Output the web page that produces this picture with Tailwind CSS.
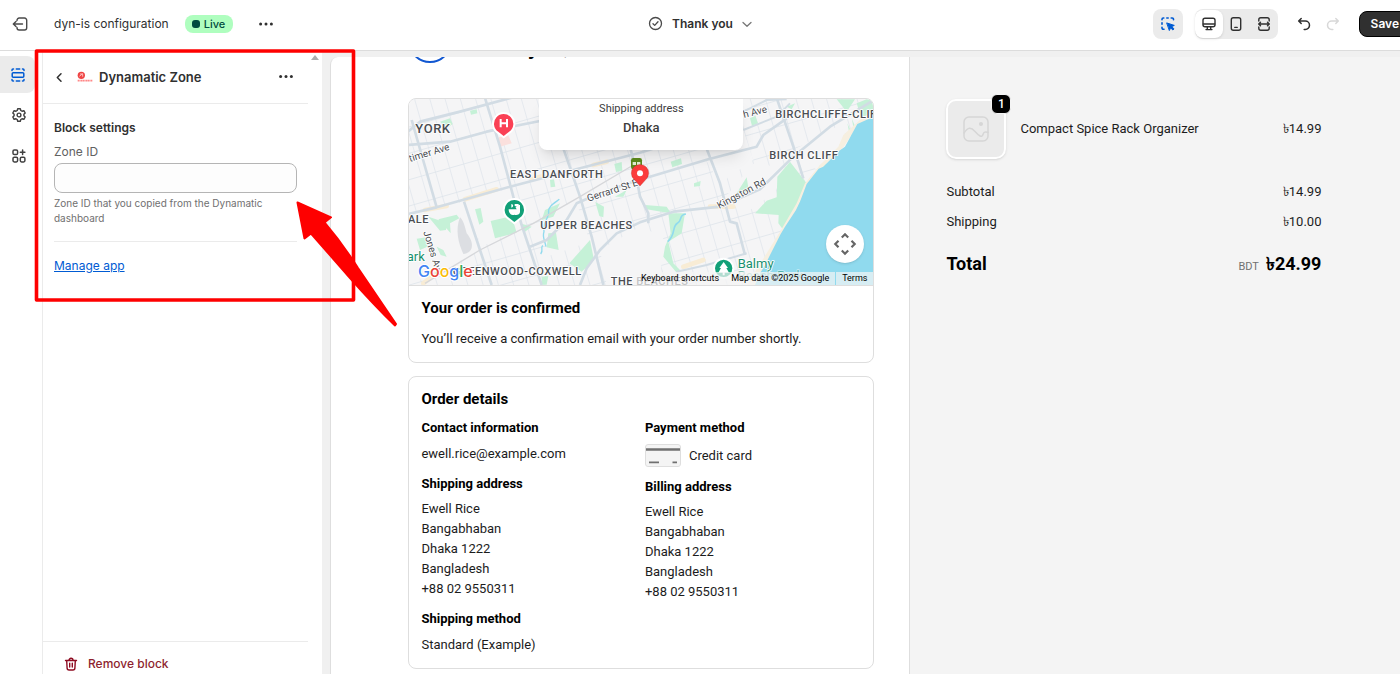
<!DOCTYPE html>
<html lang="en">
<head>
    <meta charset="UTF-8">
    <meta name="viewport" content="width=device-width, initial-scale=1.0">
    <title>dyn-is configuration</title>
    <script src="https://cdn.jsdelivr.net/npm/@tailwindcss/browser@4"></script>
</head>
<body class="relative h-screen overflow-hidden flex flex-col bg-[#f0f0f0] font-['Inter',sans-serif] text-[13px] leading-5 text-[#303030]">
    <!-- Top bar -->
    <header class="relative z-10 h-[51px] shrink-0 overflow-hidden grid grid-cols-[1fr_auto_1fr] items-center bg-white border-b border-[#dcdcdc] pb-[3px]">
        <div class="flex items-center pl-3">
            <button type="button" aria-label="Exit">
                <svg class="size-4" viewBox="0 0 16 16" fill="none" stroke="#4a4a4a" stroke-width="1.4" stroke-linecap="round" stroke-linejoin="round"><path d="M5 4.600V4.200A2.200 2.200 0 0 1 7.200 2H12.500A2.200 2.200 0 0 1 14.700 4.200V11.800A2.200 2.200 0 0 1 12.500 14H7.200A2.200 2.200 0 0 1 5 11.800V11.400"/><path d="M10.500 8H1.500M4 5.400L1.300 8L4 10.600"/></svg>
            </button>
            <h1 class="ml-[26px] text-xs leading-5">dyn-is configuration</h1>
            <span class="ml-4 flex items-center gap-1 h-[18px] rounded-lg bg-[#affebf] pl-[7px] pr-2 text-[11px] font-medium text-[#014b40]"><span class="size-2 rounded-[3px] bg-[#014b40]"></span>Live</span>
            <button type="button" aria-label="More actions" class="ml-[26px]">
                <svg class="w-[14px] h-4" viewBox="0 0 14 16" fill="#303030"><circle cx="1.600" cy="8" r="1.500"/><circle cx="7" cy="8" r="1.500"/><circle cx="12.400" cy="8" r="1.500"/></svg>
            </button>
        </div>
        <button type="button" class="flex items-center gap-[9px] text-xs leading-5 font-semibold">
            <svg class="size-[15px]" viewBox="0 0 15 15" fill="none" stroke="#4a4a4a" stroke-width="1.300" stroke-linecap="round" stroke-linejoin="round"><circle cx="7.500" cy="7.500" r="6"/><path d="M5 7.800L6.700 9.400L10 5.800"/></svg>
            Thank you
            <svg class="size-[10px]" viewBox="0 0 10 10" fill="none" stroke="#777" stroke-width="1.300" stroke-linecap="round" stroke-linejoin="round"><path d="M1 3.500L5 7.300L9 3.500"/></svg>
        </button>
        <div class="flex items-center justify-end -mr-[11px]">
            <button type="button" aria-label="Inspector" class="size-[30px] rounded-lg bg-[#ebebeb] grid place-items-center">
                <svg class="size-4" viewBox="0 0 16 16" fill="none" stroke="#005bd3" stroke-width="1.600" stroke-linecap="round" stroke-linejoin="round"><path d="M2 3.800V3.200A1.200 1.200 0 0 1 3.200 2H3.800M6.800 2H8.200M11.200 2H12.300A1.200 1.200 0 0 1 13.500 3.200V3.800M2 6.800V8.200M2 11.300V12A1.200 1.200 0 0 0 3.200 13.200H4"/><path fill="#005bd3" stroke-width="1" d="M7 7L14.300 9.400L11.800 10.600L14 12.900L12.800 14L10.600 11.800L9.500 14.200Z"/></svg>
            </button>
            <div class="ml-3 flex items-center h-[30px] rounded-lg bg-[#ebebeb]">
                <button type="button" aria-label="Desktop" class="size-7 rounded-lg bg-white shadow grid place-items-center">
                    <svg class="size-4" viewBox="0 0 16 16" fill="none" stroke="#303030" stroke-width="1.400" stroke-linecap="round" stroke-linejoin="round"><rect x="2" y="2.200" width="12" height="8.600" rx="2"/><path d="M2.300 8H13.700M6.300 11V13.300M9.700 11V13.300M5 13.600H11"/></svg>
                </button>
                <button type="button" aria-label="Mobile" class="size-[27px] grid place-items-center">
                    <svg class="size-4" viewBox="0 0 16 16" fill="none" stroke="#303030" stroke-width="1.400" stroke-linecap="round" stroke-linejoin="round"><rect x="3.300" y="1.800" width="9.400" height="12.400" rx="2"/><path d="M6.800 11.400H9.200"/></svg>
                </button>
                <button type="button" aria-label="Full width" class="size-7 grid place-items-center">
                    <svg class="size-4" viewBox="0 0 16 16" fill="none" stroke="#303030" stroke-width="1.400" stroke-linecap="round" stroke-linejoin="round"><path d="M2.800 5V3.800A2 2 0 0 1 4.800 1.800H11.200A2 2 0 0 1 13.200 3.800V5M2.800 11V12.200A2 2 0 0 0 4.800 14.200H11.200A2 2 0 0 0 13.200 12.200V11M3 8H13M4.500 6.300L2.700 8L4.500 9.700M11.500 6.300L13.300 8L11.500 9.700"/></svg>
                </button>
            </div>
            <button type="button" aria-label="Undo" class="ml-[18px]">
                <svg class="size-4" viewBox="0 0 16 16" fill="none" stroke="#303030" stroke-width="1.500" stroke-linecap="round" stroke-linejoin="round"><path d="M5.200 2.500L2.700 5L5.200 7.500M3 5H9.300A4.200 4.200 0 0 1 9.300 13.400H8.200"/></svg>
            </button>
            <button type="button" aria-label="Redo" disabled class="ml-[13px]">
                <svg class="size-4" viewBox="0 0 16 16" fill="none" stroke="#d8d8d8" stroke-width="1.500" stroke-linecap="round" stroke-linejoin="round"><path d="M10.800 2.500L13.300 5L10.800 7.500M13 5H6.700A4.200 4.200 0 0 0 6.700 13.400H7.800"/></svg>
            </button>
            <button type="button" class="ml-[18px] h-[26px] px-[11px] rounded-lg border border-black bg-[#303030] text-xs font-semibold text-white">Save</button>
        </div>
    </header>

    <div class="flex flex-1 min-h-0">
        <!-- Icon rail -->
        <nav class="w-[42px] shrink-0 bg-white pt-[5px] flex flex-col gap-[3px]">
            <button type="button" aria-label="Sections" class="w-[35px] h-[37px] rounded-lg rounded-l-none bg-[#ebebeb] grid place-items-center">
                <svg class="size-4" viewBox="0 0 16 16" fill="none" stroke="#005bd3" stroke-width="1.500" stroke-linecap="round" stroke-linejoin="round"><rect x="2.200" y="5.800" width="11.600" height="4.400" rx="1"/><path d="M2 3.600V3A1 1 0 0 1 3 2H3.500M6.300 2H9.700M12.500 2H13A1 1 0 0 1 14 3V3.600M2 12.400V13A1 1 0 0 0 3 14H3.500M6.300 14H9.700M12.500 14H13A1 1 0 0 0 14 13V12.400"/></svg>
            </button>
            <button type="button" aria-label="Settings" class="w-[37px] h-[38px] grid place-items-center">
                <svg class="size-4" viewBox="0 0 16 16" fill="none" stroke="#404040" stroke-width="1.400" stroke-linejoin="round"><path d="M6.700 1.700H9.300L9.800 3.500L11 4.200L12.900 3.700L14.200 6L12.900 7.300V8.700L14.200 10L12.900 12.300L11 11.800L9.800 12.500L9.300 14.300H6.700L6.200 12.500L5 11.800L3.100 12.300L1.800 10L3.100 8.700V7.300L1.800 6L3.100 3.700L5 4.200L6.200 3.500Z"/><circle cx="8" cy="8" r="1.900"/></svg>
            </button>
            <button type="button" aria-label="Apps" class="w-[37px] h-[38px] grid place-items-center">
                <svg class="size-4" viewBox="0 0 16 16" fill="none" stroke="#404040" stroke-width="1.500" stroke-linecap="round"><rect x="2" y="2" width="4.600" height="4.600" rx="1.300"/><rect x="2" y="9.300" width="4.600" height="4.600" rx="1.300"/><rect x="9.300" y="9.300" width="4.600" height="4.600" rx="1.300"/><path d="M11.600 2V6.600M9.300 4.300H13.900"/></svg>
            </button>
        </nav>

        <!-- Block settings panel -->
        <aside class="w-[280px] shrink-0 flex bg-white border-l border-[#ebebeb]">
            <div class="flex-1 flex flex-col">
                <div class="h-[53px] flex items-center px-[11px] border-b border-[#ebebeb]">
                    <button type="button" aria-label="Back">
                        <svg class="size-[11px]" viewBox="0 0 11 11" fill="none" stroke="#303030" stroke-width="1.500" stroke-linecap="round" stroke-linejoin="round"><path d="M7 1.800L3.300 5.500L7 9.200"/></svg>
                    </button>
                    <svg class="ml-3 w-4 h-3" viewBox="0 0 48 36"><circle cx="13" cy="13" r="11" fill="#ef4444"/><path d="M7 16L17 8M9 9H17V17" stroke="#fbb" stroke-width="3" fill="none"/><path d="M2 29H46" stroke="#f88" stroke-width="5" stroke-dasharray="4 1"/></svg>
                    <h2 class="ml-[6px] font-semibold">Dynamatic Zone</h2>
                    <button type="button" aria-label="Block actions" class="ml-auto mr-1">
                        <svg class="w-[14px] h-4" viewBox="0 0 14 16" fill="#303030"><circle cx="1.600" cy="7.500" r="1.500"/><circle cx="7" cy="7.500" r="1.500"/><circle cx="12.400" cy="7.500" r="1.500"/></svg>
                    </button>
                </div>
                <div class="px-[11px] pt-[14px] flex flex-col">
                    <h3 class="text-xs leading-5 font-semibold">Block settings</h3>
                    <label for="zone-id" class="mt-1 text-xs leading-5 text-[#616161]">Zone ID</label>
                    <input id="zone-id" type="text" aria-describedby="zone-help" class="mt-px h-[30px] w-full rounded-lg border border-[#b5b5b5] bg-[#fdfdfd] px-3">
                    <p id="zone-help" class="mt-[3px] text-[10px] leading-[15px] text-[#707070]">Zone ID that you copied from the Dynamatic dashboard</p>
                    <hr class="mt-[15px] border-[#ebebeb]">
                    <a href="#" class="mt-[14px] self-start text-xs leading-5 text-[#005bd3] underline">Manage app</a>
                </div>
                <div class="mt-auto h-[33px] shrink-0 border-t border-[#ebebeb] pl-[21px] pt-3">
                    <button type="button" class="flex items-center gap-[10px] text-xs leading-5 font-medium text-[#8e1f2f]">
                        <svg class="size-[14px]" viewBox="0 0 14 14" fill="none" stroke="#8e0b21" stroke-width="1.400" stroke-linecap="round" stroke-linejoin="round"><path d="M1.500 3.500H12.500M5 3.300A2 2 0 0 1 9 3.300M2.700 3.700L3.100 11A2 2 0 0 0 5.100 13H8.900A2 2 0 0 0 10.900 11L11.300 3.700M5.700 6.300V10M8.300 6.300V10"/></svg>
                        Remove block
                    </button>
                </div>
            </div>
            <div class="w-[14px] pt-1 flex justify-center items-start">
                <svg class="w-2 h-[5px]" viewBox="0 0 8 5"><path d="M0 5L4 0L8 5Z" fill="#adadad"/></svg>
            </div>
        </aside>

        <!-- Checkout preview -->
        <main class="flex-1 min-w-0 ml-2 mt-[6px] rounded-tl-lg overflow-hidden border-l border-[#dedede] grid grid-cols-[580fr_490fr] bg-white font-['Roboto',sans-serif] text-[13px] leading-5 text-[#1c1c1c]">
            <section class="flex justify-end pr-[35px] border-r border-[#dedede]">
                <div class="w-full max-w-[466px] -mt-[38px]">
                    <div class="flex items-end gap-2 h-11">
                        <svg class="size-11" viewBox="0 0 44 44" fill="none" stroke="#1157d1" stroke-width="2"><circle cx="22" cy="22" r="21"/><path d="M14 22.500L20 28L30 16.500"/></svg>
                        <h2 class="pb-1 text-[22px] leading-6 font-bold text-black">Thank you, Ewell!</h2>
                    </div>

                    <article class="mt-[35px] rounded-lg border border-[#dedede] overflow-hidden">
                        <div class="relative border-b border-[#dedede]">
                            <svg class="block w-full h-[186px]" viewBox="27 147 1392 558" preserveAspectRatio="xMidYMid slice" font-family="Roboto, sans-serif">
                                <defs>
                                    <pattern id="blocks" width="44" height="76" patternUnits="userSpaceOnUse" patternTransform="rotate(-16)">
                                        <path d="M0 0H44M0 0V76" stroke="#dde4ea" stroke-width="4" fill="none"/>
                                    </pattern>
                                </defs>
                                <rect x="0" y="100" width="1460" height="640" fill="#f5f5f6"/>
                                <rect x="0" y="100" width="1460" height="640" fill="url(#blocks)"/>
                                <g fill="#f5f5f6">
                                    <path d="M24 490L190 455L240 600L130 660L24 705ZM190 455L330 415L375 525L245 590ZM420 480L530 460L570 575L440 620ZM960 460L1070 330L1160 370L1120 430L1050 480ZM1180 300L1320 225L1340 260L1250 360ZM900 300L1030 240L1060 330L960 400ZM600 600L720 530L790 560L780 705H620Z"/>
                                </g>
                                <!-- parks -->
                                <g fill="#c5f1d7">
                                    <path d="M272 513L335 498L350 548L285 565ZM225 478L242 474L250 515L238 524ZM85 500L140 518L138 540L120 542ZM115 508L170 494L178 505L150 520L152 550ZM50 566L80 562L82 590L60 600ZM110 590L130 600L140 620L122 615ZM210 182L230 178L232 190L213 194ZM120 215L150 205L158 222L140 235ZM435 480L480 460L460 500L425 510ZM445 550L468 548L476 600L440 592ZM508 640L570 570L582 630L545 665ZM586 456L612 470L610 502L598 498ZM643 342L665 336L667 362L648 366ZM450 390L462 388L466 410L452 412ZM645 440L680 420L670 440ZM735 465L800 470L820 500L810 490L740 478ZM425 680L445 678L440 704L425 704ZM360 520L395 530L375 545Z"/>
                                    <path d="M1170 335L1220 400L1200 470L1150 540L1135 520L1136 495L1065 490L1100 452L1130 442L1132 380ZM1010 430L1040 382L1047 425ZM812 335L843 325L846 342L817 352ZM882 400L902 393L900 408L882 410ZM805 490L855 490L845 550L805 575L820 640L840 660L830 668L790 620L795 590L812 550ZM1050 205L1066 197L1074 220L1056 228ZM1310 148H1365L1340 185ZM1370 160L1400 148H1422V200L1390 225ZM1250 370L1260 345L1290 338L1275 365ZM1160 170L1185 160L1175 178ZM1342 220L1360 260L1350 258ZM1355 205L1370 240L1362 240Z"/>
                                </g>
                                <path d="M1330 255L1390 200L1422 185V210L1375 225L1330 292L1270 350L1220 410L1180 500L1150 545L1095 645L1070 705H1040L1100 610L1140 545L1190 460L1215 400L1260 345L1315 290Z" fill="#f6efe0"/>
                                <path d="M1422 200L1372 222L1335 290L1318 302L1270 350L1256 356L1220 402L1200 455L1188 480L1155 530L1142 552L1115 605L1095 645L1080 670L1065 705H1422Z" fill="#90daee"/>
                                <path d="M478 448C462 460 442 470 446 490C440 515 428 520 432 545C426 560 434 570 438 590M428 586C420 596 432 600 422 612" fill="none" stroke="#90daee" stroke-width="4"/>
                                <path d="M858 492C835 494 848 512 832 520C815 530 828 555 803 575" fill="none" stroke="#90daee" stroke-width="5"/>
                                <path d="M180 502C165 540 175 580 190 612C220 610 225 580 200 550C195 530 190 510 180 502Z" fill="#dcdee2"/>
                                <path d="M296 262L325 256L335 280L300 290Z" fill="#fbe0dd"/>
                                <!-- roads -->
                                <g fill="none" stroke="#f8ecd5" stroke-width="14" stroke-linecap="round"><path d="M75 480L140 468M195 448L290 418M395 388L430 378M580 345L620 335M70 700L115 665M930 470L1000 470M910 630L850 650"/></g>
                                <g fill="none" stroke="#d2dce4" stroke-width="8" stroke-linejoin="round">
                                    <path d="M24 492L110 472L330 410L540 355L720 308L850 268"/>
                                    <path d="M24 285L150 275L260 245L420 213M24 245L60 215L180 185L420 120L480 144"/>
                                    <path d="M35 210L110 472M255 144L300 290L340 440L365 525L390 600L425 705M192 455L240 600L275 705M490 295L540 440L575 560L610 705"/>
                                    <path d="M390 590L440 570L500 510L530 460L600 430L700 395L925 328L1070 290L1090 255L1160 205"/>
                                    <path d="M540 705L560 655L600 600L650 550L720 517L820 485L960 470L1080 418L1180 320L1290 230L1422 150"/>
                                    <path d="M675 230L700 330L720 440L745 490L745 520M920 296L960 400L990 515L1010 520L1035 615M1130 144L1180 290L1210 385"/>
                                    <path d="M830 665L920 645L1040 610M1030 240L1130 200L1170 160M1020 190L1100 150L1160 148" stroke-width="6"/>
                                </g>
                                <path d="M75 700L240 600L400 520L540 440L700 345" fill="none" stroke="#d6d7da" stroke-width="4"/>

                                <!-- place labels -->
                                <g fill="#4a4d52" stroke="#fff" stroke-width="5" stroke-linejoin="round" paint-order="stroke" font-size="33" font-weight="500">
                                    <g class="tracking-wider">
                                        <text x="46" y="248" font-size="39">YORK</text>
                                        <text x="330" y="383">EAST DANFORTH</text>
                                        <text x="24" y="519">ALE</text>
                                        <text x="421" y="537">UPPER BEACHES</text>
                                        <text x="158" y="675">GREENWOOD-COXWELL</text>
                                        <text x="632" y="706">THE BEACHES</text>
                                        <text x="1108" y="328">BIRCH CLIFF</text>
                                        <text x="1126" y="204">BIRCHCLIFFE-CLIFFSIDE</text>
                                    </g>
                                    <g font-weight="400" font-size="30">
                                        <text transform="translate(30 336) rotate(-17)">timer Ave</text>
                                        <text transform="translate(70 546) rotate(73)">Jones Ave</text>
                                        <text transform="translate(565 455) rotate(-18)">Gerrard St E</text>
                                        <text transform="translate(958 477) rotate(-28)">Kingston Rd</text>
                                        <text transform="translate(1032 204) rotate(-14)">h Ave</text>
                                    </g>
                                    <g font-weight="400" font-size="39" fill="#188f6e">
                                        <text x="20" y="632">ark</text>
                                        <text x="1013" y="653">Balmy</text>
                                        <text x="1013" y="690" opacity=".5">Beach Park</text>
                                    </g>
                                </g>

                                <!-- hospital, park and garden markers -->
                                <g stroke="#fff" stroke-width="6">
                                    <path d="M311 262L292 247A32 32 0 1 1 330 247Z" fill="#fa4155"/>
                                    <path d="M343 520L324 505A32 32 0 1 1 362 505Z" fill="#12a078"/>
                                    <circle cx="971" cy="655" r="29" fill="#12a078"/>
                                </g>
                                <path d="M302 207V232M321 207V232M302 220H321" stroke="#fff" stroke-width="6"/>
                                <path d="M326 478H350L346 470L360 464V486C360 494 350 496 343 494C332 498 326 488 326 478ZM334 462A5 5 0 1 1 334 473ZM344 462H356V468H344Z" fill="#fff"/>
                                <path d="M971 636L984 654H979L987 668H974V676H968V668H955L963 654H958Z" fill="#fff"/>
                                <rect x="693" y="324" width="33" height="34" rx="7" fill="#5c8a1c"/>
                                <path d="M698 336H708V345H698ZM711 336H721V345H711Z" fill="#e5efd2"/>
                                <path d="M720 408L702 388A26 26 0 1 1 738 388Z" fill="#fb3b3b" stroke="#b3261e" stroke-width="1"/>
                                <circle cx="720" cy="370" r="9" fill="#fff"/>

                                <!-- Google logo -->
                                <text x="54" y="681" font-size="48" font-weight="500" font-family="Inter, sans-serif" stroke="#fff" stroke-width="6" paint-order="stroke" stroke-linejoin="round"><tspan fill="#4285f4">G</tspan><tspan fill="#ea4335">o</tspan><tspan fill="#fbbc04">o</tspan><tspan fill="#4285f4">g</tspan><tspan fill="#34a853">l</tspan><tspan fill="#ea4335">e</tspan></text>
                            </svg>
                            <!-- address bubble -->
                            <div class="absolute top-0 left-[28%] w-[204px] h-[51px] rounded-b-lg bg-white shadow-lg text-center text-[#3c3c3c]">
                                <p class="text-[11px] leading-5">Shipping address</p>
                                <p class="font-medium text-[13px] leading-[18px]">Dhaka</p>
                            </div>
                            <button type="button" aria-label="Map camera controls" class="absolute right-[9px] bottom-[22px] size-[38px] rounded-full bg-white shadow grid place-items-center">
                                <svg class="size-6" viewBox="0 0 24 24" fill="none" stroke="#666" stroke-width="2.200"><path d="M8.800 5.500L12 2.300L15.200 5.500M8.800 18.500L12 21.700L15.200 18.500M5.500 8.800L2.300 12L5.500 15.200M18.500 8.800L21.700 12L18.500 15.200"/></svg>
                            </button>
                            <div class="absolute right-0 bottom-0 h-[13px] flex text-[9px] leading-[13px] text-black">
                                <button type="button" class="bg-[#f5f5f5]/70 px-[6px]">Keyboard shortcuts</button>
                                <span class="bg-[#f5f5f5]/70 px-[6px]">Map data ©2025 Google</span>
                                <a href="#" class="ml-px bg-[#f5f5f5]/70 px-[6px]">Terms</a>
                            </div>
                        </div>
                        <div class="px-3 pt-3 pb-[13px]">
                            <h3 class="text-[15px] leading-5 font-bold text-black">Your order is confirmed</h3>
                            <p class="mt-[11px]">You’ll receive a confirmation email with your order number shortly.</p>
                        </div>
                    </article>

                    <article class="mt-[13px] rounded-lg border border-[#dedede] px-3 pt-3 pb-[13px]">
                        <h3 class="text-[15px] leading-5 font-bold text-black">Order details</h3>
                        <div class="mt-[9px] grid grid-cols-2 gap-x-[7px]">
                            <div>
                                <h4 class="font-bold text-black">Contact information</h4>
                                <p class="mt-[6px]">ewell.rice@example.com</p>
                                <h4 class="mt-[10px] font-bold text-black">Shipping address</h4>
                                <address class="mt-[5px] not-italic leading-5 flex flex-col">
                                    <span>Ewell Rice</span><span>Bangabhaban</span><span>Dhaka 1222</span><span>Bangladesh</span><span>+88 02 9550311</span>
                                </address>
                                <h4 class="mt-[10px] font-bold text-black">Shipping method</h4>
                                <p class="mt-[6px]">Standard (Example)</p>
                            </div>
                            <div>
                                <h4 class="font-bold text-black">Payment method</h4>
                                <div class="mt-[6px] flex items-center gap-2">
                                    <svg class="w-9 h-[23px]" viewBox="0 0 36 23"><rect x=".5" y=".5" width="35" height="22" rx="2.500" fill="#f4f4f4" stroke="#dedede"/><path d="M1 5.500H35" stroke="#707070" stroke-width="2.600"/><path d="M4 18.300H14M27.500 18.300H32" stroke="#707070" stroke-width="1.800"/></svg>
                                    <span>Credit card</span>
                                </div>
                                <h4 class="mt-[10px] font-bold text-black">Billing address</h4>
                                <address class="mt-[5px] not-italic leading-5 flex flex-col">
                                    <span>Ewell Rice</span><span>Bangabhaban</span><span>Dhaka 1222</span><span>Bangladesh</span><span>+88 02 9550311</span>
                                </address>
                            </div>
                        </div>
                    </article>
                </div>
            </section>

            <!-- Order summary -->
            <section class="bg-[#f4f4f4] pl-9 pr-4 pt-[42px]">
                <div class="w-full max-w-[375px]">
                    <div class="flex items-center">
                        <div class="relative size-[60px] shrink-0 rounded-[10px] border-2 border-white bg-[#ebebeb] shadow-sm grid place-items-center">
                            <svg class="size-[26px]" viewBox="0 0 26 26" fill="none" stroke="#d6d6d6" stroke-width="1.500" stroke-linecap="round"><rect x="1" y="1" width="24" height="24" rx="5"/><path d="M1 17C5 11 8 11 12 15.500S19 22 20 18.500S23 16 25 16.500"/><circle cx="18" cy="8" r="1.300" fill="#d6d6d6"/></svg>
                            <span class="absolute -top-[7px] -right-[7px] size-5 rounded-md border border-[#f4f4f4] bg-black text-white text-xs leading-[18px] font-medium text-center">1</span>
                        </div>
                        <span class="ml-[14px] flex-1">Compact Spice Rack Organizer</span>
                        <span>৳14.99</span>
                    </div>
                    <dl class="mt-[23px] grid grid-cols-2 gap-y-[10px]">
                        <dt>Subtotal</dt>
                        <dd class="text-right">৳14.99</dd>
                        <dt>Shipping</dt>
                        <dd class="text-right">৳10.00</dd>
                        <dt class="mt-[10px] text-lg leading-6 font-bold text-black">Total</dt>
                        <dd class="mt-[10px] flex justify-end items-baseline gap-[7px] text-lg leading-6 font-bold text-black"><span class="text-[11px] leading-6 font-normal text-[#707070]">BDT</span>৳24.99</dd>
                    </dl>
                </div>
            </section>
        </main>
    </div>

    <!-- Highlight and pointer over the settings panel -->
    <svg class="absolute z-20 top-0 left-0 w-[400px] h-[330px] pointer-events-none" viewBox="0 0 400 330" fill="#fe0000" stroke="#fe0000" stroke-linejoin="round">
        <rect x="36.500" y="51" width="317" height="249" fill="none" stroke-width="3.600"/>
        <path d="M297.500 202.500L331 217.300L324.500 222.500Q342 243 358 268L396 324L395 325.500Q374 305 350 278L311 233.500L304.500 238.500Z" stroke-width="2"/>
    </svg>
</body>
</html>
